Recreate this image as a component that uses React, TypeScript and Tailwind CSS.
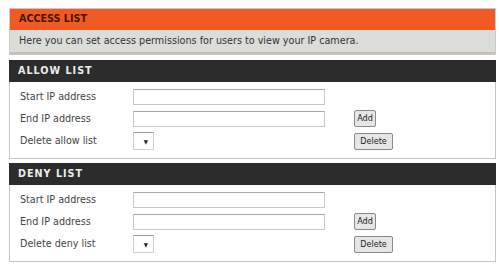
import React from 'react';

const font = { fontFamily: '"DejaVu Sans Condensed", "Liberation Sans", sans-serif' };

type RowProps = { label: string; children?: React.ReactNode };

const Row: React.FC<RowProps> = ({ label, children }) => (
  <div className="flex items-center">
    <span className="w-[113px] text-[10.7px] text-[#444]">{label}</span>
    {children}
  </div>
);

const TextBox: React.FC = () => (
  <div className="w-[192px] h-[16px] border border-[#c8c8c8] border-t-[#a8a8a8] bg-white" />
);

const Btn: React.FC<{ label: string; w: string }> = ({ label, w }) => (
  <button
    className={`${w} h-[17px] ml-[29px] border border-[#8a8a8a] rounded-[2px] bg-[#e6e6e6] text-[9px] text-[#222] leading-none`}
  >
    {label}
  </button>
);

const ListBox: React.FC<{ title: string; what: string }> = ({ title, what }) => (
  <div>
    <div className="h-[22px] bg-[#2c2c2c] flex items-center pl-[9px] text-[10.7px] font-bold tracking-[1px] text-[#ececec]">
      {title}
    </div>
    <div className="border border-t-0 border-[#c4c4c4] pl-[10px] pt-[7px] pb-[8px] flex flex-col gap-[5px]">
      <Row label="Start IP address">
        <TextBox />
      </Row>
      <Row label="End IP address">
        <TextBox />
        <Btn label="Add" w="w-[22px]" />
      </Row>
      <Row label={`Delete ${what} list`}>
        <div className="w-[21px] h-[18px] border border-[#d0d0d0] border-t-[#999] bg-white flex items-center justify-end pr-[5px]">
          <span className="text-[6px] text-[#222]">▼</span>
        </div>
        <div className="w-[171px]" />
        <Btn label="Delete" w="w-[39px]" />
      </Row>
    </div>
  </div>
);

export default function App() {
  return (
    <div className="w-[499px] h-[265px] bg-white pt-[8px] pl-[9px]" style={font}>
      <div className="w-[487px] flex flex-col">
        <div className="border border-[#c9c9c9]">
          <div className="h-[21px] bg-[#f15a22] flex items-center pl-[9px] text-[10.7px] font-bold text-[#4a1405]">
            ACCESS LIST
          </div>
          <div className="h-[24px] bg-[#dcdcd9] border-b-2 border-[#cbbfb2] flex items-center pl-[9px] text-[10.7px] text-[#333]">
            Here you can set access permissions for users to view your IP camera.
          </div>
        </div>
        <div className="mt-[5px]">
          <ListBox title="ALLOW LIST" what="allow" />
        </div>
        <div className="mt-[4px]">
          <ListBox title="DENY LIST" what="deny" />
        </div>
      </div>
    </div>
  );
}
